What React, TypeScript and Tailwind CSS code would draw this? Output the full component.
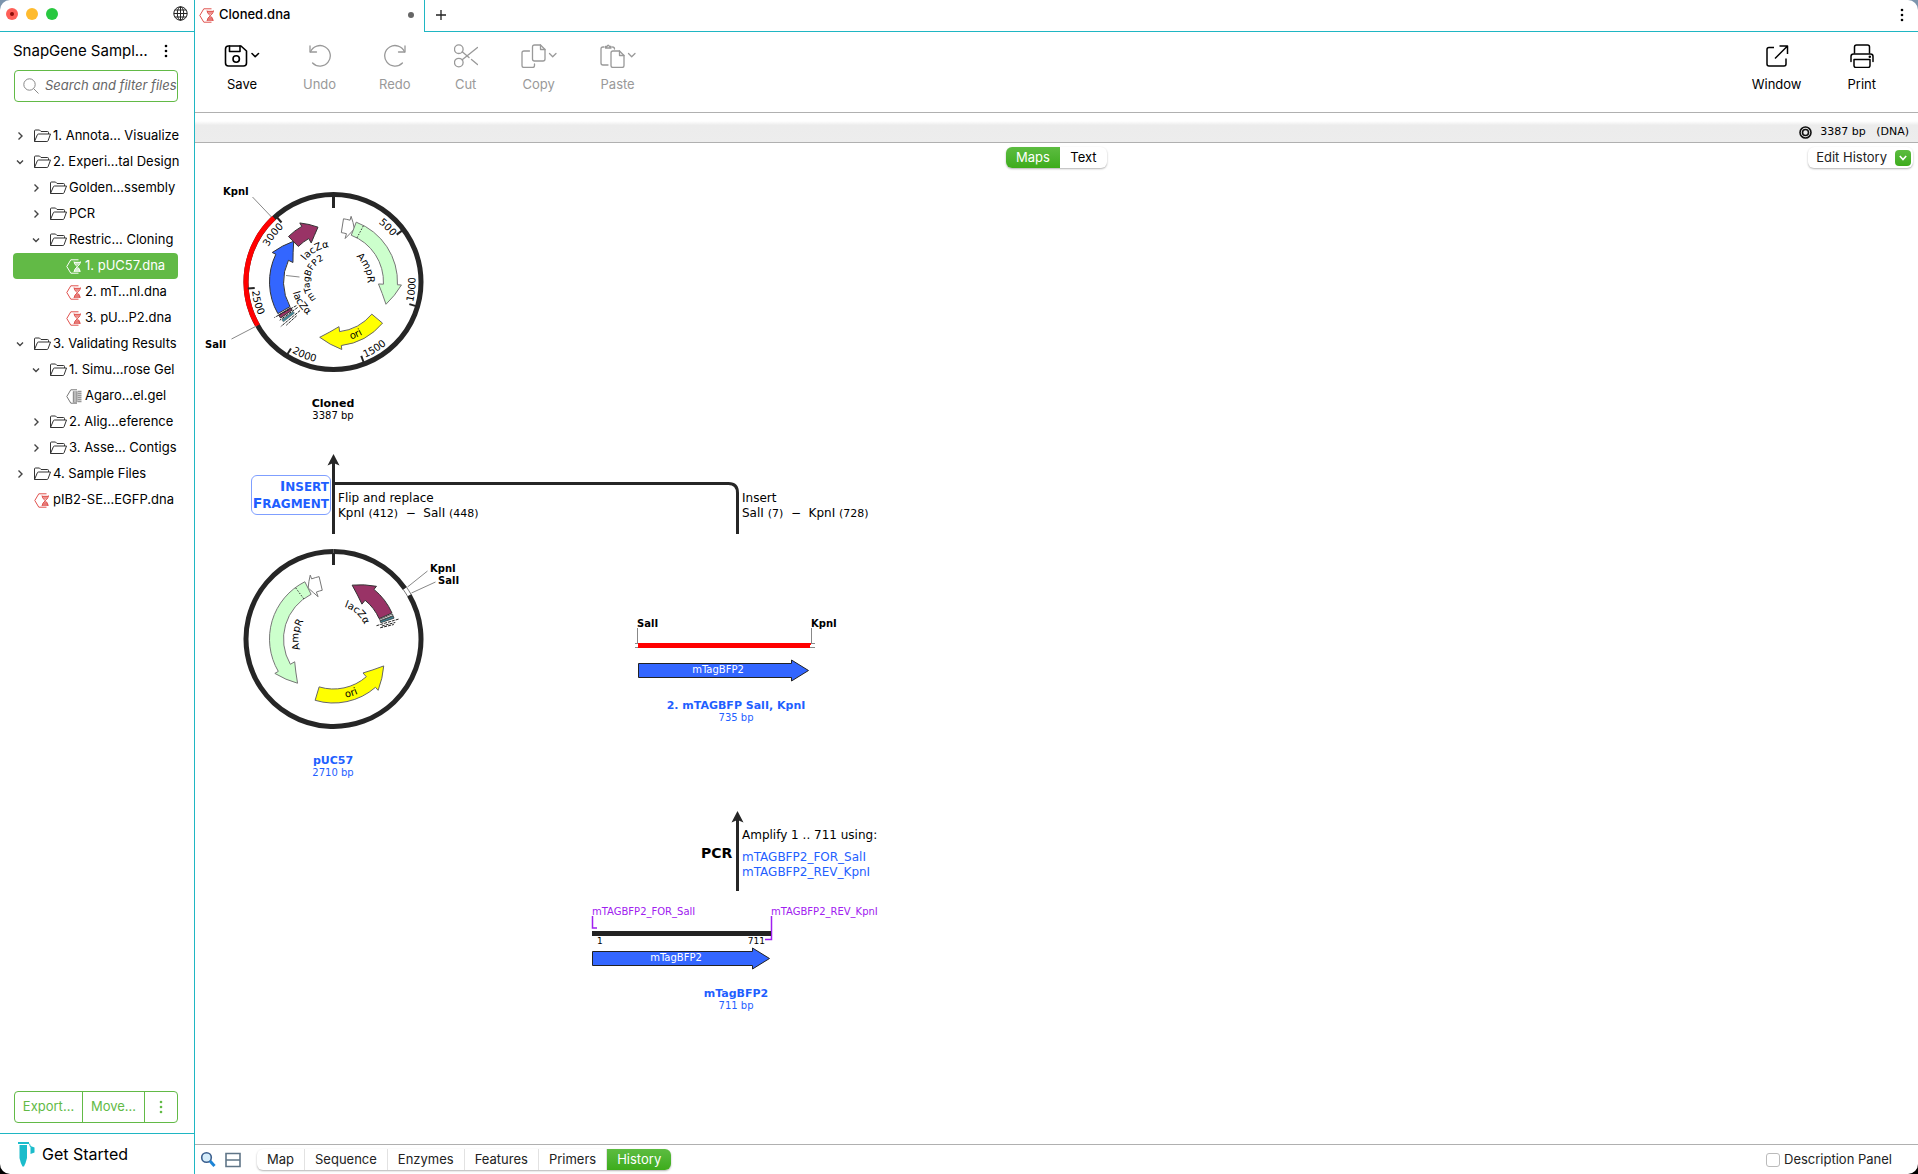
import type { ReactNode } from "react";
import { useState } from "react";

type TreeItem = {
  label: string;
  level: number;
  kind: "folder" | "dna" | "gel";
  open?: boolean;
};

type Feature = {
  start: number;
  head: number;
  tip: number;
  fill: string;
  stroke: string;
};

const tree: TreeItem[] = [
  { label: "1. Annota… Visualize", level: 0, kind: "folder" },
  { label: "2. Experi…tal Design", level: 0, kind: "folder", open: true },
  { label: "Golden…ssembly", level: 1, kind: "folder" },
  { label: "PCR", level: 1, kind: "folder" },
  { label: "Restric… Cloning", level: 1, kind: "folder", open: true },
  { label: "1. pUC57.dna", level: 2, kind: "dna" },
  { label: "2. mT…nl.dna", level: 2, kind: "dna" },
  { label: "3. pU…P2.dna", level: 2, kind: "dna" },
  { label: "3. Validating Results", level: 0, kind: "folder", open: true },
  { label: "1. Simu…rose Gel", level: 1, kind: "folder", open: true },
  { label: "Agaro…el.gel", level: 2, kind: "gel" },
  { label: "2. Alig…eference", level: 1, kind: "folder" },
  { label: "3. Asse… Contigs", level: 1, kind: "folder" },
  { label: "4. Sample Files", level: 0, kind: "folder" },
  { label: "pIB2-SE…EGFP.dna", level: 0, kind: "dna" },
];

const indents = ["pl-px", "pl-[17px]", "pl-[33px]"];

const views = ["Map", "Sequence", "Enzymes", "Features", "Primers", "History"];

/* ---------- icons ---------- */

const Kebab = ({ className = "" }: { className?: string }) => (
  <svg width="4" height="16" viewBox="0 0 4 16" fill="currentColor" className={className}>
    <circle cx="2" cy="3" r="1.3" />
    <circle cx="2" cy="8" r="1.3" />
    <circle cx="2" cy="13" r="1.3" />
  </svg>
);

const Chevron = ({ open }: { open?: boolean }) => (
  <svg width="12" height="12" viewBox="0 0 12 12" fill="none" stroke="#444" strokeWidth="1.4">
    <path d={open ? "M3 4.5L6 7.5L9 4.5" : "M4.5 2.5L8 6L4.5 9.5"} />
  </svg>
);

const FolderIcon = () => (
  <svg width="17" height="14" viewBox="0 0 17 14" fill="none" stroke="#333" strokeWidth="1" strokeLinejoin="round">
    <path d="M.5 12.500V2q0-1 1-1h4l1.500 1.500h6.500q1 0 1 1V5" />
    <path d="M.5 12.500L3.300 5.900q.3-.9 1.200-.9H16.500L14.100 11.700q-.3.8-1.200.8H.5" />
  </svg>
);

const DnaIcon = ({ color = "#e0524e" }: { color?: string }) => (
  <svg width="16" height="15" viewBox="0 0 16 15" fill="none" stroke={color} strokeWidth="1">
    <path d="M12.500 .8H4.800L.8 7.500L4.800 14.200H12.500" />
    <path d="M8 2.500Q8 5 11 7.500Q14 10 14 13M14.500 2.500Q14.500 5 11.500 7.500Q8.200 10 8 13" />
    <path d="M8 3.500H14.500M9 5H13.500M9 10H13.500M8 12H14.500" strokeWidth=".9" />
    <path d="M8.200 2.500H14.300L11.300 7.500Z" fill={color} stroke="none" opacity=".35" />
    <path d="M9 10.500Q11 7.500 13.500 10.500L14.200 13H8.200Z" fill={color} stroke="none" opacity=".6" />
  </svg>
);

const GelIcon = () => (
  <svg width="16" height="15" viewBox="0 0 16 15" fill="none" stroke="#777" strokeWidth="1">
    <path d="M11 .8H4.800L.8 7.500L4.800 14.200H11" />
    <path d="M7 3H11M7 5H11M7 7H11M7 9H11M7 11H11M7 13H11" strokeWidth="1.200" />
    <path d="M7.300 2.500V13M11 2.500V13" strokeWidth=".8" />
    <path d="M11.500 2.500H15.500M11.500 4.500H15.500M11.500 6.500H15.500M11.500 8.500H15.500M11.500 10.500H15.500M11.500 12.500H15.500" stroke="#999" strokeWidth="1.300" />
  </svg>
);

const GlobeIcon = () => (
  <svg width="15" height="15" viewBox="0 0 15 15" fill="none" stroke="#222" strokeWidth="1">
    <circle cx="7.500" cy="7.500" r="6.700" />
    <ellipse cx="7.500" cy="7.500" rx="3.200" ry="6.700" />
    <path d="M.8 7.500H14.200M7.500 .8V14.200M1.800 4H13.200M1.800 11H13.200" />
  </svg>
);

const TubeIcon = () => (
  <svg width="17" height="25" viewBox="0 0 17 25" fill="#1bbccb">
    <path d="M0 0H11V2H0Z" />
    <path d="M1.500 3H9V16Q7.500 22 6 24.500H4.500Q2.500 21 1.500 16Z" />
    <path d="M12.500 4L16.500 5.500V10.500L12.500 12Z" />
    <path d="M10 1Q12 1.500 12.500 5" fill="none" stroke="#1bbccb" />
  </svg>
);

const ToolSvg = ({ children, width = 24 }: { children: ReactNode; width?: number }) => (
  <svg
    width={width}
    height="24"
    viewBox={`0 0 ${width} 24`}
    fill="none"
    stroke="currentColor"
    strokeWidth="1.300"
    strokeLinecap="round"
    strokeLinejoin="round"
  >
    {children}
  </svg>
);

const SaveIcon = () => (
  <ToolSvg width={36}>
    <path d="M4.500 2H17L22.500 7V19Q22.500 22 19.500 22H4.500Q1.500 22 1.500 19V5Q1.500 2 4.500 2Z" strokeWidth="1.600" />
    <path d="M5.500 2V7.500H16V2" strokeWidth="1.600" />
    <circle cx="12.200" cy="15" r="3.200" strokeWidth="1.600" />
    <path d="M28 9.500L31.200 12.700L34.500 9.500" strokeWidth="1.600" />
  </ToolSvg>
);

const UndoIcon = () => (
  <ToolSvg>
    <path d="M2 2V8H8.500" />
    <path d="M2.500 7.800A10.300 10.300 0 1 1 4.600 19" />
  </ToolSvg>
);

const RedoIcon = () => (
  <ToolSvg>
    <path d="M22 2V8H15.500" />
    <path d="M21.500 7.800A10.300 10.300 0 1 0 19.400 19" />
  </ToolSvg>
);

const CutIcon = () => (
  <ToolSvg>
    <circle cx="4.800" cy="5.200" r="4.300" />
    <circle cx="4.800" cy="18.600" r="4.300" />
    <path d="M8.200 7.800L15 13.500M17.500 15.500L23.500 20.500M8.200 15.800L23.500 3.500" />
  </ToolSvg>
);

const CopyIcon = () => (
  <ToolSvg width={36}>
    <path d="M13.500 1H19.500L24 5.500V15Q24 17 22 17H13.500Q11.500 17 11.500 15V3Q11.500 1 13.500 1Z" />
    <path d="M19.500 1V5.500H24" />
    <path d="M8.500 7H3Q1 7 1 9V21.500Q1 23.500 3 23.500H11.500Q13.500 23.500 13.500 21.500V20" />
    <path d="M28.500 9.500L31.700 12.700L35 9.500" />
  </ToolSvg>
);

const PasteIcon = () => (
  <ToolSvg width={36}>
    <path d="M4 3H3Q1 3 1 5V19Q1 21 3 21H8M12.500 3Q14.500 3 14.500 5" />
    <path d="M5.500 4V2.500H7Q8 0 9.500 2.500H11V4Z" />
    <path d="M13 7H19.500L24 11.500V21.500Q24 23.500 22 23.500H13Q11 23.500 11 21.500V9Q11 7 13 7Z" />
    <path d="M19.500 7V11.500H24" />
    <path d="M28.500 9.500L31.700 12.700L35 9.500" />
  </ToolSvg>
);

const WindowIcon = () => (
  <ToolSvg>
    <path d="M9 3.500H4Q2 3.500 2 5.500V20Q2 22 4 22H19Q21 22 21 20V14.500" strokeWidth="1.500" strokeLinecap="butt" />
    <path d="M14.500 2H22.500V10M22.500 2L10 14.500" strokeWidth="1.500" strokeLinecap="butt" />
  </ToolSvg>
);

const PrintIcon = () => (
  <ToolSvg>
    <path d="M4.500 9V3Q4.500 1 6.500 1H17.500Q19.500 1 19.500 3V9" strokeWidth="1.500" />
    <path d="M1 17.500V12.500Q1 10 3.500 10H20.500Q23 10 23 12.500V17.500" strokeWidth="1.500" />
    <path d="M4 15.500H20V21.500Q20 23.500 18 23.500H6Q4 23.500 4 21.500Z" strokeWidth="1.500" />
    <circle cx="19.800" cy="12.800" r=".6" fill="currentColor" />
  </ToolSvg>
);

/* ---------- map geometry ---------- */

// degrees run clockwise from twelve o'clock
const pt = (r: number, deg: number) => {
  const a = (deg * Math.PI) / 180;
  return `${(r * Math.sin(a)).toFixed(2)} ${(-r * Math.cos(a)).toFixed(2)}`;
};

const arc = (r: number, from: number, to: number) =>
  `M${pt(r, from)}A${r} ${r} 0 ${Math.abs(to - from) > 180 ? 1 : 0} ${to > from ? 1 : 0} ${pt(r, to)}`;

const arrow = ({ start, head, tip }: Feature) => {
  const cw = tip > start ? 1 : 0;
  return (
    `M${pt(64, start)}A64 64 0 0 ${cw} ${pt(64, head)}L${pt(68, head)}` +
    `Q${pt(63, (head + tip) / 2)} ${pt(57, tip)}Q${pt(50, (head + tip) / 2)} ${pt(45, head)}` +
    `L${pt(50, head)}A50 50 0 0 ${1 - cw} ${pt(50, start)}Z`
  );
};

const bar = (from: number, to: number) =>
  `M${pt(64, from)}L${pt(64, to)}L${pt(50, to)}L${pt(50, from)}Z`;

const ArcText = ({
  id,
  r,
  at,
  flip,
  size = 10,
  anchor = "middle",
  children,
}: {
  id: string;
  r: number;
  at: number;
  flip?: boolean;
  size?: number;
  anchor?: "start" | "middle" | "end";
  children: string;
}) => (
  <>
    <path id={id} d={flip ? arc(r, at + 85, at - 85) : arc(r, at - 85, at + 85)} fill="none" />
    <text fontSize={size} textAnchor={anchor}>
      <textPath href={`#${id}`} startOffset="50%">
        {children}
      </textPath>
    </text>
  </>
);

const Features = ({ items }: { items: Feature[] }) => (
  <>
    {items.map((f) => (
      <path key={f.start} d={arrow(f)} fill={f.fill} stroke={f.stroke} strokeWidth="1" />
    ))}
  </>
);

const clonedFeatures: Feature[] = [
  { start: 9, head: 15, tip: 21.5, fill: "#fff", stroke: "#777" },
  { start: 20.8, head: 92.5, tip: 113, fill: "#ccffcc", stroke: "#777" },
  { start: 130, head: 173, tip: 194, fill: "#ffff00", stroke: "#666" },
  { start: 240.4, head: 295.7, tip: 315.7, fill: "#3366ff", stroke: "#333" },
  { start: 315.3, head: 330.3, tip: 344.2, fill: "#993366", stroke: "#333" },
];

const pucFeatures: Feature[] = [
  { start: 347, head: 340, tip: 333.6, fill: "#fff", stroke: "#777" },
  { start: 333.4, head: 239.6, tip: 219.1, fill: "#ccffcc", stroke: "#777" },
  { start: 196.7, head: 139, tip: 118.2, fill: "#ffff00", stroke: "#666" },
  { start: 66, head: 39.2, tip: 19.1, fill: "#993366", stroke: "#333" },
];

const ClonedPlasmid = () => (
  <g transform="translate(138.5 107)">
    <circle r="87.500" fill="none" stroke="#262626" strokeWidth="5" />
    <path d={arc(87.5, 240.1, 317.1)} fill="none" stroke="#f00" strokeWidth="5" />
    <path d="M0 -86V-74" stroke="#262626" strokeWidth="3" />
    {[500, 1000, 1500, 2000, 2500, 3000].map((n) => {
      const deg = (n / 3387) * 360;
      const flip = deg > 90 && deg < 270;
      return (
        <g key={n}>
          <path d={`M${pt(86, deg)}L${pt(79, deg)}`} stroke="#262626" strokeWidth="2" />
          <ArcText
            id={`tick-${n}`}
            r={flip ? 82 : 74}
            at={flip ? deg - 2 : deg - 1}
            flip={flip}
            anchor={flip ? "start" : "end"}
          >
            {String(n)}
          </ArcText>
        </g>
      );
    })}
    <path d="M-81 -85L-62 -65M-102 57L-77 44" stroke="#888" />
    <Features items={clonedFeatures} />
    <path d={`M${pt(50, 28)}L${pt(64, 28)}`} stroke="#333" strokeDasharray="1.5 1.5" />
    <path d={bar(235.8, 239)} fill="#993366" stroke="#333" />
    <path d={bar(231.5, 233.8)} fill="#3d8a9c" stroke="#555" strokeWidth=".6" />
    <path
      d={`M${pt(44, 237.5)}L${pt(69, 239)}M${pt(44, 229.5)}L${pt(69, 229.8)}M${pt(50, 227.5)}L${pt(64, 227.5)}M${pt(44, 234.6)}L${pt(66, 234.6)}`}
      stroke="#222"
      strokeDasharray="3 1"
    />
    <path d="M-47.500 -6.500L-34 -5" stroke="#888" />
    <ArcText id="c-amp" r={34} at={67}>AmpR</ArcText>
    <ArcText id="c-lac1" r={35} at={330}>lacZα</ArcText>
    <ArcText id="c-tag" r={24} at={281} size={9}>mTagBFP2</ArcText>
    <ArcText id="c-lac2" r={42} at={237} flip>lacZα</ArcText>
    <ArcText id="c-ori" r={60} at={157} flip>ori</ArcText>
  </g>
);

const PucPlasmid = () => (
  <g transform="translate(138.5 464)">
    <path d={arc(87.5, 60, 360)} fill="none" stroke="#262626" strokeWidth="5" />
    <path d={arc(87.5, 0, 54.7)} fill="none" stroke="#262626" strokeWidth="5" />
    <path d={`${arc(85.5, 54.7, 60)}${arc(89.5, 54.7, 60)}`} fill="none" stroke="#555" strokeWidth=".8" />
    <path d="M0 -86V-74" stroke="#262626" strokeWidth="3" />
    <path d="M94 -68L74 -52M102 -57L78 -46" stroke="#888" />
    <Features items={pucFeatures} />
    <path d={`M${pt(50, 323.5)}L${pt(64, 323.5)}`} stroke="#333" strokeDasharray="1.5 1.5" />
    <path d={bar(67, 68.5)} fill="#fff" stroke="#333" strokeWidth=".8" />
    <path d={bar(69, 71)} fill="#3d8a9c" stroke="#333" strokeWidth=".8" />
    <path
      d={`M${pt(45, 72.8)}L${pt(68, 73)}M${pt(50, 75)}L${pt(64, 75)}M${pt(48, 76.5)}L${pt(62, 76.5)}`}
      stroke="#222"
      strokeDasharray="3 1"
    />
    <ArcText id="p-amp" r={35} at={277}>AmpR</ArcText>
    <ArcText id="p-lac" r={34} at={42}>lacZα</ArcText>
    <ArcText id="p-ori" r={60} at={162} flip>ori</ArcText>
  </g>
);

/* ---------- history canvas ---------- */

const HistoryDrawing = () => (
  <svg width="760" height="860" viewBox="0 0 760 860" className="absolute left-0 top-0">
    <ClonedPlasmid />
    <PucPlasmid />

    <g fill="none" stroke="#262626" strokeWidth="3">
      <path d="M138.500 288V359" />
      <path d="M138.500 308.500H533.500Q542.500 308.500 542.500 318V359" />
      <path d="M542.500 645V716" />
    </g>
    <path d="M138.500 279L144.500 290.500L138.500 288L132.500 290.500Z" fill="#262626" />
    <path d="M542.500 636L548.500 647.500L542.500 645L536.500 647.500Z" fill="#262626" />

    <path d="M442.500 453V468M616.500 453V468" stroke="#888" />
    <path d="M440 468.500H443M440 472.500H443M615 468.500H620M615 472.500H620" stroke="#888" />
    <path d="M443 468H616V470H615V473H443Z" fill="#f00" />
    <path d="M443.500 488.500H596.500V485L613.500 495.500L596.500 506V502.500H443.500Z" fill="#3366ff" stroke="#222" />

    <path d="M397.500 741V753H402M576.500 741V764.500H570" fill="none" stroke="#a020f0" strokeWidth="1.500" />
    <path d="M397 756H576V761H397Z" fill="#222" />
    <path d="M397.500 776.500H557.500V773L574.500 783.500L557.500 794V790.500H397.500Z" fill="#3366ff" stroke="#222" />

    <g fontSize="10" fill="#fff" textAnchor="middle">
      <text x="523" y="498">mTagBFP2</text>
      <text x="481" y="786">mTagBFP2</text>
    </g>
    <g fontSize="10" fontWeight="bold">
      <text x="28" y="20">KpnI</text>
      <text x="10" y="173">SalI</text>
      <text x="235" y="397">KpnI</text>
      <text x="243" y="409">SalI</text>
      <text x="442" y="452">SalI</text>
      <text x="616" y="452">KpnI</text>
    </g>
    <g fontSize="10" fill="#a020f0">
      <text x="397" y="740">mTAGBFP2_FOR_SalI</text>
      <text x="576" y="740">mTAGBFP2_REV_KpnI</text>
    </g>
    <g fontSize="9">
      <text x="402" y="769">1</text>
      <text x="570" y="769" textAnchor="end">711</text>
    </g>
  </svg>
);

const Caption = ({
  name,
  size,
  place,
  linked,
}: {
  name: string;
  size: string;
  place: string;
  linked?: boolean;
}) => (
  <div
    className={`absolute w-48 -translate-x-1/2 flex flex-col items-center text-center ${place} ${
      linked ? "text-[#1f5fff]" : "text-black"
    }`}
  >
    {linked ? (
      <a href="#" className="text-[11px] leading-3 font-bold">{name}</a>
    ) : (
      <span className="text-[11px] leading-3 font-bold">{name}</span>
    )}
    <span className="text-[10px] leading-3">{size}</span>
  </div>
);

const HistoryCanvas = () => (
  <div className="relative flex-1 min-h-0 overflow-hidden font-['Verdana','DejaVu_Sans',sans-serif] text-black">
    <HistoryDrawing />

    <Caption name="Cloned" size="3387 bp" place="left-[138px] top-[223px]" />
    <Caption name="pUC57" size="2710 bp" place="left-[138px] top-[580px]" linked />
    <Caption name="2. mTAGBFP SalI, KpnI" size="735 bp" place="left-[541px] top-[525px]" linked />
    <Caption name="mTagBFP2" size="711 bp" place="left-[541px] top-[813px]" linked />

    <button className="absolute left-[56px] top-[300px] w-20 h-10 rounded-md border border-[#7f9fff] pr-px text-right text-xs leading-4 font-bold text-[#1f5fff]">
      <span className="text-sm leading-4">I</span>NSERT
      <br />
      <span className="text-sm leading-4">F</span>RAGMENT
    </button>

    <div className="absolute left-[143px] top-[316px] flex flex-col text-xs leading-[15px]">
      <p>Flip and replace</p>
      <p className="whitespace-pre">
        KpnI <span className="text-[11px]">(412)</span>{"  −  "}SalI <span className="text-[11px]">(448)</span>
      </p>
    </div>
    <div className="absolute left-[547px] top-[316px] flex flex-col text-xs leading-[15px]">
      <p>Insert</p>
      <p className="whitespace-pre">
        SalI <span className="text-[11px]">(7)</span>{"  −  "}KpnI <span className="text-[11px]">(728)</span>
      </p>
    </div>

    <p className="absolute left-[506px] top-[670px] text-sm leading-4 font-bold">PCR</p>
    <div className="absolute left-[547px] top-[653px] flex flex-col text-xs leading-[15px]">
      <p className="mb-[7px] whitespace-nowrap">Amplify 1 .. 711 using:</p>
      <a href="#" className="text-[#1f5fff]">mTAGBFP2_FOR_SalI</a>
      <a href="#" className="text-[#1f5fff]">mTAGBFP2_REV_KpnI</a>
    </div>
  </div>
);

/* ---------- chrome ---------- */

const ToolButton = ({
  label,
  icon,
  disabled,
}: {
  label: string;
  icon: ReactNode;
  disabled?: boolean;
}) => (
  <button
    disabled={disabled}
    className="flex flex-col items-center gap-2 text-[13px] leading-4 text-black disabled:text-[#999]"
  >
    {icon}
    {label}
  </button>
);

const Sidebar = () => {
  const [selected, setSelected] = useState("1. pUC57.dna");

  return (
    <aside className="w-[195px] shrink-0 flex flex-col border-r border-[#1fb6c3]">
      <div className="h-8 shrink-0 flex items-center justify-between border-b border-[#1fb6c3] pl-1.5 pr-1.5 pb-1">
        <div className="flex gap-2">
          <span className="size-3 rounded-full bg-[#fe5f57] flex items-center justify-center">
            <span className="size-1 rounded-full bg-[#8c0d08]" />
          </span>
          <span className="size-3 rounded-full bg-[#febb2e]" />
          <span className="size-3 rounded-full bg-[#28c840]" />
        </div>
        <button aria-label="Language">
          <GlobeIcon />
        </button>
      </div>

      <div className="flex items-center justify-between h-[38px] pl-[13px] pr-[26px]">
        <h1 className="text-[15px] leading-5 whitespace-nowrap">SnapGene Sampl…</h1>
        <button aria-label="Collection menu">
          <Kebab />
        </button>
      </div>

      <label className="ml-3.5 mr-4 h-8 flex items-center gap-1.5 rounded border border-[#62ba46] pl-2 overflow-hidden">
        <svg width="16" height="16" viewBox="0 0 16 16" fill="none" stroke="#888" className="shrink-0">
          <circle cx="6.500" cy="6.500" r="5.700" />
          <path d="M10.500 10.500L15.500 15.500" />
        </svg>
        <input
          aria-label="Search and filter files"
          placeholder="Search and filter files"
          className="flex-1 min-w-0 outline-none text-[13px] italic placeholder:text-[#666]"
        />
      </label>

      <ul className="mt-[21px] pl-[13px] pr-4 text-[13px]">
        {tree.map((item) => {
          const active = item.label === selected;
          return (
            <li key={item.label}>
              <button
                onClick={() => setSelected(item.label)}
                className={`w-full h-[26px] flex items-center rounded whitespace-nowrap ${indents[item.level]} ${
                  active ? "bg-[#62ba46] text-white" : "text-black"
                }`}
              >
                <span className="w-5 shrink-0 flex">
                  {item.kind === "folder" && <Chevron open={item.open} />}
                </span>
                <span className="w-[19px] shrink-0 flex">
                  {item.kind === "folder" && <FolderIcon />}
                  {item.kind === "dna" && <DnaIcon color={active ? "#fff" : undefined} />}
                  {item.kind === "gel" && <GelIcon />}
                </span>
                {item.label}
              </button>
            </li>
          );
        })}
      </ul>

      <div className="mt-auto mb-2.5 ml-3.5 mr-4 h-8 flex items-stretch rounded border border-[#62ba46] text-[13px] text-[#62ba46] divide-x divide-[#62ba46]">
        <button className="w-[68px]">Export…</button>
        <button className="w-[62px]">Move…</button>
        <button aria-label="More" className="flex-1 flex items-center justify-center">
          <Kebab />
        </button>
      </div>

      <button className="h-[41px] shrink-0 flex items-center gap-[7px] border-t border-[#1fb6c3] pl-[18px] text-base">
        <TubeIcon />
        Get Started
      </button>
    </aside>
  );
};

const TabBar = () => (
  <div className="h-8 shrink-0 flex">
    <div className="w-[230px] flex items-center border-r border-[#1fb6c3] pl-1 pr-2.5 pb-0.5">
      <DnaIcon />
      <span className="ml-1 text-[13px] font-medium">Cloned.dna</span>
      <span className="ml-auto size-1.5 rounded-full bg-[#666]" />
    </div>
    <div className="flex-1 flex items-center justify-between border-b border-[#1fb6c3] pl-[11px] pr-3.5 pb-px">
      <button aria-label="New tab">
        <svg width="10" height="10" viewBox="0 0 10 10" stroke="#222" strokeWidth="1.300">
          <path d="M5 0V10M0 5H10" />
        </svg>
      </button>
      <button aria-label="Window menu">
        <Kebab />
      </button>
    </div>
  </div>
);

const Toolbar = () => (
  <div className="h-[81px] shrink-0 flex items-start justify-between border-b border-[#b0b0b0] pt-3 pl-[29px] pr-[42px]">
    <div className="flex gap-[43px]">
      <ToolButton label="Save" icon={<SaveIcon />} />
      <ToolButton label="Undo" icon={<UndoIcon />} disabled />
      <ToolButton label="Redo" icon={<RedoIcon />} disabled />
      <ToolButton label="Cut" icon={<CutIcon />} disabled />
      <ToolButton label="Copy" icon={<CopyIcon />} disabled />
      <ToolButton label="Paste" icon={<PasteIcon />} disabled />
    </div>
    <div className="flex gap-[46px]">
      <ToolButton label="Window" icon={<WindowIcon />} />
      <ToolButton label="Print" icon={<PrintIcon />} />
    </div>
  </div>
);

const ViewSwitch = () => (
  <div className="h-8 shrink-0 grid grid-cols-3 items-start pt-1">
    <div className="col-start-2 justify-self-center h-[21px] flex rounded-md overflow-hidden text-[13px] shadow-[0_1px_2px_rgba(0,0,0,0.3)]">
      <button className="w-[54px] bg-linear-to-b from-[#5cbc40] to-[#3dac1a] text-white">Maps</button>
      <button className="w-[47px]">Text</button>
    </div>
    <button className="justify-self-end mr-[5px] h-[21px] flex items-center gap-2 rounded-md pl-2 pr-0.5 text-[13px] text-[#222] shadow-[0_1px_2px_rgba(0,0,0,0.3)]">
      Edit History
      <span className="size-4 rounded bg-linear-to-b from-[#5cbc40] to-[#3dac1a] flex items-center justify-center">
        <svg width="8" height="6" viewBox="0 0 8 6" fill="none" stroke="#fff" strokeWidth="1.600">
          <path d="M.8 1L4 4.500L7.200 1" />
        </svg>
      </span>
    </button>
  </div>
);

const BottomBar = () => {
  const [view, setView] = useState("History");

  return (
    <div className="h-[30px] shrink-0 flex items-center border-t border-[#b0b0b0] pl-[5px] pr-[26px] text-[13px] text-[#222]">
      <button aria-label="Find" className="mr-2">
        <svg width="17" height="17" viewBox="0 0 17 17" fill="none">
          <circle cx="6.500" cy="6.500" r="4.800" fill="#d5ecfa" stroke="#3b5f8e" strokeWidth="1.600" />
          <path d="M10 10L14.500 15" stroke="#1d84d6" strokeWidth="3" />
        </svg>
      </button>
      <button aria-label="Split view">
        <svg width="16" height="16" viewBox="0 0 16 16" fill="none" stroke="#5f7587" strokeWidth="1.600">
          <path d="M1 1.500H15V14.500H1ZM1 8H15" />
        </svg>
      </button>
      <div className="ml-4 h-[21px] flex rounded-md overflow-hidden divide-x divide-[#e2e2e2] shadow-[0_1px_2px_rgba(0,0,0,0.3)]">
        {views.map((v) => (
          <button
            key={v}
            onClick={() => setView(v)}
            className={`px-2.5 ${v === view ? "bg-linear-to-b from-[#5cbc40] to-[#3dac1a] text-white" : ""}`}
          >
            {v}
          </button>
        ))}
      </div>
      <label className="ml-auto flex items-center gap-1">
        <input type="checkbox" className="appearance-none size-3.5 rounded-[3px] border border-[#bbb] bg-white" />
        Description Panel
      </label>
    </div>
  );
};

const App = () => (
  <div className="h-screen bg-linear-to-b from-[#7d95ad] to-black">
    <div className="h-full flex overflow-hidden rounded-[10px] bg-white text-black font-['Inter','Liberation_Sans',sans-serif]">
      <Sidebar />
      <main className="flex-1 min-w-0 flex flex-col">
        <TabBar />
        <Toolbar />
        <div className="mt-2 h-[22px] shrink-0 flex items-center justify-end gap-2 border-b border-[#b0b0b0] bg-linear-to-b from-white via-[#ececec] via-20% to-[#ededed] pt-0.5 pr-[9px] text-[11px] font-['Verdana','DejaVu_Sans',sans-serif]">
          <svg width="13" height="13" viewBox="0 0 13 13" fill="none" stroke="#111" strokeWidth="1.600">
            <circle cx="6.500" cy="6.500" r="5.500" />
            <circle cx="6.500" cy="6.500" r="3" />
          </svg>
          <span className="whitespace-pre">3387 bp   (DNA)</span>
        </div>
        <ViewSwitch />
        <HistoryCanvas />
        <BottomBar />
      </main>
    </div>
  </div>
);

export default App;
